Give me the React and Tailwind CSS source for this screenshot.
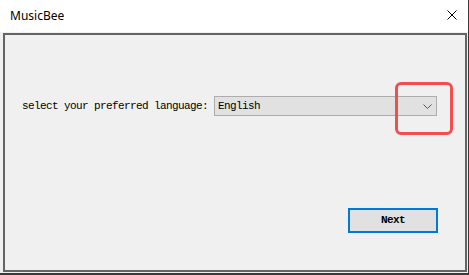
export default function App() {
  return (
    <div className="relative w-[469px] h-[275px] bg-[#3a3a3a] overflow-hidden">
      <div className="w-[468px] h-[273px] bg-[#f0f0f0] flex flex-col">
        {/* title bar */}
        <div className="h-[32px] bg-white flex items-center justify-between pl-[10px] pr-[11px] shrink-0">
          <span className="text-[12px] text-black pb-[1px]" style={{ fontFamily: '"Noto Sans", "Segoe UI", sans-serif' }}>
            MusicBee
          </span>
          <svg width="10" height="10" viewBox="0 0 10 10" className="mb-[2px]">
            <path d="M0.5 0.5 L9.5 9.5 M9.5 0.5 L0.5 9.5" stroke="#000" strokeWidth="1" fill="none" />
          </svg>
        </div>

        {/* content */}
        <div className="flex-1 pl-[3px] pr-[1px] pt-[1px] pb-[1px] flex">
          <div
            className="flex-1 border-2 border-[#646464] flex flex-col text-[11px] tracking-[-0.6px] text-black"
            style={{ fontFamily: '"Liberation Mono", "DejaVu Sans Mono", monospace' }}
          >
            <div className="mt-[61px] ml-[17px] flex items-center h-[20px]">
              <span className="w-[192px] leading-none">select your preferred language:</span>
              <div className="w-[223px] h-[20px] bg-[#e1e1e1] border border-[#adadad] flex items-center justify-between pl-[3px] pr-[4px]">
                <span className="leading-none">English</span>
                <svg width="9" height="5" viewBox="0 0 9 5">
                  <path d="M0.5 0.5 L4.5 4.5 L8.5 0.5" stroke="#555" strokeWidth="1" fill="none" />
                </svg>
              </div>
            </div>
            <div className="mt-[92px] flex justify-end mr-[27px]">
              <button className="w-[90px] h-[25px] bg-[#e1e1e1] border-2 border-[#0078d7] font-bold leading-none flex items-center justify-center">
                Next
              </button>
            </div>
          </div>
        </div>
      </div>

      {/* annotation highlight */}
      <div className="absolute left-[395px] top-[82px] w-[58px] h-[53px] border-[3px] border-[#f24e4e] rounded-[6px]" />
    </div>
  );
}
